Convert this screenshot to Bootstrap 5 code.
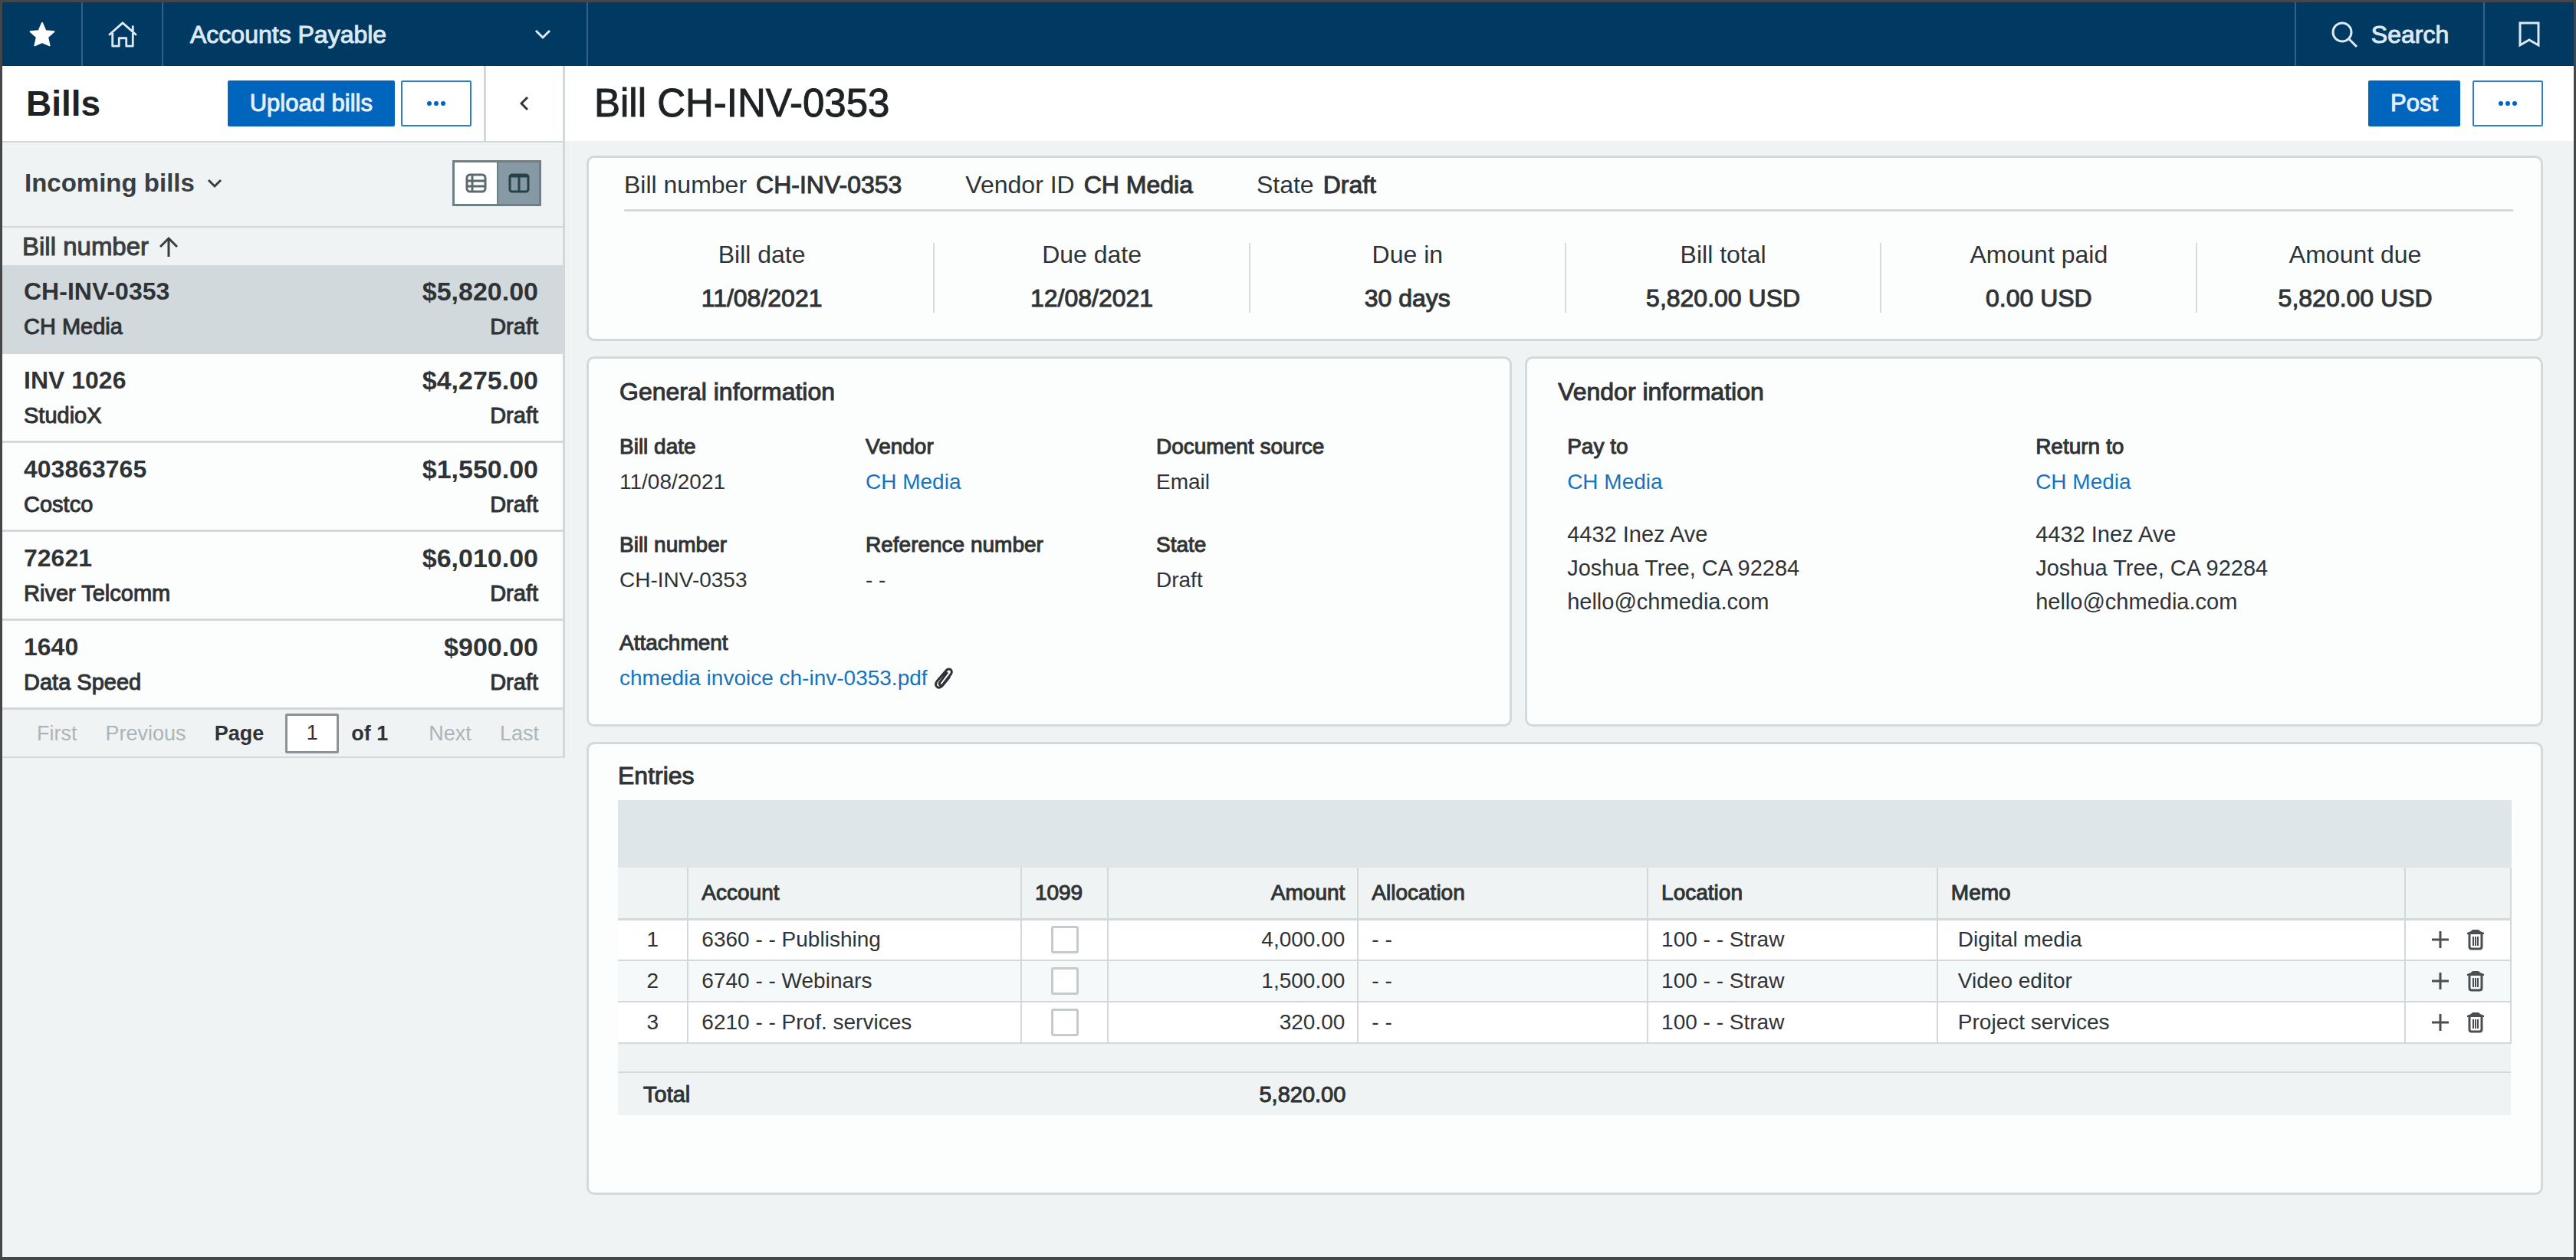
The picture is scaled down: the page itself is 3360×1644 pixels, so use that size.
<!DOCTYPE html>
<html lang="en">
<head>
<meta charset="utf-8">
<meta name="viewport" content="width=device-width, initial-scale=1">
<title>Accounts Payable - Bill CH-INV-0353</title>
<link href="https://cdn.jsdelivr.net/npm/bootstrap@5.3.0/dist/css/bootstrap.min.css" rel="stylesheet">
<style>
  :root { --line: #d3d9da; --ink: #303335; --brand: #0065bd; --surface: #eff3f3; }
  body {
    font-family: "Liberation Sans", Arial, sans-serif;
    font-size: 28px; line-height: 46px; color: var(--ink);
    background: var(--surface); min-height: 100vh;
    border: 3px solid #444648; border-bottom-width: 4px;
  }
  svg { display: block; flex: none; fill: none; stroke: currentColor; }
  .medium { font-weight: 400; -webkit-text-stroke: 1px currentColor; }
  a { color: #1673c0; text-decoration: none; }

  /* top bar */
  .topbar { height: 83px; background: #003962; color: #dce8f2; font-size: 32px; }
  .topbar .cell { border: 0 solid #2f618a; border-radius: 0; background: none; color: inherit; font-size: inherit; padding: 0; }
  .cell-icon { width: 105px; border-right-width: 2px !important; }
  .cell-app { width: 554px; border-right-width: 2px !important; padding: 0 46px 0 35px !important; }
  .cell-search { width: 246px; border-left-width: 2px !important; gap: 17px; }
  .cell-mark { width: 118px; border-left-width: 2px !important; }

  /* buttons */
  .btn-app { height: 60px; border-radius: 2px; border: 2px solid var(--brand); font-size: 31px; line-height: 36px; padding: 0 27px; }
  .btn-app.solid { background: var(--brand); color: #e2f0fd; }
  .btn-app.more { width: 92px; padding: 0; background: #fff; color: var(--brand); border-color: #2e7fc9; }

  /* bills list */
  .sidebar { width: 734px; border-right: 3px solid var(--line); }
  .side-head { height: 100px; background: #fff; border-bottom: 2px solid var(--line); padding-left: 31px; }
  .page-title { font-size: 51px; line-height: 60px; color: #1f2224; }
  .side-title { font-size: 46px; line-height: 60px; font-weight: 700; color: #1f2224; }
  .collapse-btn { width: 103px; height: 98px; border: 0; border-left: 3px solid var(--line); background: #fff; color: var(--ink); }
  .side-view { height: 111px; border-bottom: 2px solid var(--line); padding: 0 28px 4px 29px; }
  .view-select { font-size: 33px; font-weight: 700; border: 0; background: none; padding: 0; color: #3a3e40; }
  .toggle { border: 3px solid #6f7f86; }
  .toggle button { width: 55px; height: 54px; border: 0; padding: 0; background: #fff; color: #5d6a70; }
  .toggle button + button { background: #879aa3; color: #26404d; border-left: 2px solid #6f7f86; }
  .side-sort { height: 49px; padding: 0 26px; gap: 12px; font-size: 33px; border: 0; background: none; color: #3a3e40; }
  .bill { border: 0; border-bottom: 3px solid var(--line); background: #fcfefe; padding: 11px 32px 10px 28px; color: var(--ink); }
  .bill.current { background: #d2d9dc; }
  .bill .num { font-size: 32px; font-weight: 700; }
  .bill .amt { font-size: 34px; font-weight: 700; }
  .bill .sub { font-size: 29px; }
  .pager { height: 63px; border-bottom: 2px solid var(--line); font-size: 27px; padding: 0 31px 0 45px; }
  .pager .off { color: #aeb4b6; border: 0; background: none; padding: 0; }
  .pager input { width: 70px; height: 52px; margin-left: 12px; border: 3px solid #8b9396; border-radius: 2px; text-align: center; background: #fff; color: var(--ink); padding: 0; }

  /* bill detail */
  .main-head { height: 98px; background: #fff; padding: 0 40px 0 38px; }
  .detail { padding: 19px 40px 20px 28px; }
  .detail .gridgap { display: grid; gap: 20px; }
  .pair { display: grid; gap: 17px; grid-template-columns: 10fr 11fr; }
  .panel { background: #fcfefe; border: 3px solid var(--line); border-radius: 10px; }
  .panel-title { font-size: 32px; line-height: 46px; margin: 0; }
  .facts { font-size: 32px; height: 70px; margin: 0 36px 0 46px; padding-top: 12px; gap: 83px; border-bottom: 3px solid #d6dada; }
  .facts span + span { margin-left: 12px; }
  .totals { display: grid; grid-template-columns: 12fr repeat(5, 11fr); padding: 41px 36px 34px 2px; text-align: center; font-size: 32px; }
  .totals > div { height: 91px; line-height: 57px; border-right: 2px solid #d6dada; }
  .totals > div:last-child { border-right: 0; }
  .totals p { margin: -13px 0 13px; }
  .info { padding: 20px 40px 37px 40px; }
  .fields { display: grid; grid-template-columns: 321px 379px 1fr; row-gap: 36px; padding-top: 26px; }
  .parties { display: grid; grid-template-columns: 611px 1fr; padding: 26px 0 0 12px; }
  .parties address { font-size: 29px; line-height: 44px; margin: 23px 0 0; }

  /* entries grid */
  .entries { padding: 18px 38px 101px; }
  .band { height: 88px; background: #dfe6ea; margin-top: 9px; }
  .lines { table-layout: fixed; width: 100%; }
  .lines th, .lines td { height: 54px; padding: 0 16px 0 17px; border: 2px solid var(--line); border-left: 0; line-height: 46px; }
  .lines thead th { height: 67px; background: var(--surface); border-top: 0; border-bottom-width: 3px; }
  .lines tbody td { background: #fff; }
  .lines tbody tr:nth-child(2) td { background: #f6f9f9; }
  .lines .spacer td { height: 38px; background: var(--surface); border-right: 0; }
  .lines tfoot .sum > * { height: 56px; background: var(--surface); border: 0; font-size: 29px; }
  .lines tfoot .sum > th { padding-left: 33px; }
  .lines .memo { padding-left: 26px; }
  .lines input { width: 36px; height: 36px; margin: 0; appearance: none; border: 3px solid #c5cbcd; border-radius: 3px; background: #fff; display: block; margin: auto; }
  .lines button { border: 0; background: none; padding: 0; color: #4a4f52; }
</style>
</head>
<body>
<nav class="topbar d-flex align-items-stretch" aria-label="Main">
  <button class="cell cell-icon d-flex align-items-center justify-content-center" aria-label="Favorites">
    <svg width="36" height="36" viewBox="0 0 36 36" style="color:#fff"><path fill="currentColor" stroke="currentColor" stroke-width="2" stroke-linejoin="round" d="M18 3l4.400 10.200 11 1-8.300 7.300 2.500 10.900L18 28l-9.600 4.400 2.500-10.900L2.600 14.200l11-1z"/></svg>
  </button>
  <button class="cell cell-icon d-flex align-items-center justify-content-center" aria-label="Home">
    <svg width="38" height="36" viewBox="0 0 40 38" stroke-width="3" stroke-linejoin="round" stroke-linecap="round"><path d="M2 19L20 3l18 16M34 14V8M6 17v18h9V24h10v11h9V17"/></svg>
  </button>
  <button class="cell cell-app d-flex align-items-center justify-content-between">
    <span class="medium">Accounts Payable</span>
    <svg width="22" height="16" viewBox="0 0 22 16" stroke-width="3"><path d="M2 3l9 9 9-9"/></svg>
  </button>
  <button class="cell cell-search ms-auto d-flex align-items-center justify-content-center">
    <svg width="36" height="36" viewBox="0 0 36 36" stroke-width="3"><circle cx="15" cy="15" r="12"/><path d="M23.500 23.500L34 34"/></svg>
    <span class="medium">Search</span>
  </button>
  <button class="cell cell-mark d-flex align-items-center justify-content-center" aria-label="Bookmarks">
    <svg width="28" height="34" viewBox="0 0 28 34" stroke-width="3"><path d="M2 2h24v29l-12-7-12 7z"/></svg>
  </button>
</nav>

<div class="d-flex align-items-start">
  <aside class="sidebar flex-shrink-0" aria-label="Bills">
    <div class="side-head d-flex align-items-center">
      <h2 class="side-title mb-0 me-auto">Bills</h2>
      <button class="btn-app solid medium me-2">Upload bills</button>
      <button class="btn-app more me-3 d-flex align-items-center justify-content-center" aria-label="More actions">
        <svg width="30" height="8" viewBox="0 0 30 8" style="fill:currentColor;stroke:none"><circle cx="6" cy="4" r="3"/><circle cx="15" cy="4" r="3"/><circle cx="24" cy="4" r="3"/></svg>
      </button>
      <button class="collapse-btn d-flex align-items-center justify-content-center" aria-label="Collapse list">
        <svg width="12" height="20" viewBox="0 0 12 20" stroke-width="3"><path d="M10 2l-8 8 8 8"/></svg>
      </button>
    </div>
    <div class="side-view d-flex align-items-center justify-content-between">
      <button class="view-select d-flex align-items-center">Incoming bills
        <svg class="ms-3" width="20" height="14" viewBox="0 0 20 14" stroke-width="3"><path d="M2 3l8 8 8-8"/></svg>
      </button>
      <div class="toggle d-flex" role="group" aria-label="View">
        <button class="d-flex align-items-center justify-content-center" aria-label="Table view">
          <svg width="28" height="26" viewBox="0 0 28 26" stroke-width="3"><rect x="2" y="2" width="24" height="22" rx="4"/><path d="M2 10h24M2 17h24M9 2v22"/></svg>
        </button>
        <button class="d-flex align-items-center justify-content-center" aria-label="Split view" aria-pressed="true">
          <svg width="28" height="26" viewBox="0 0 28 26" stroke-width="3"><rect x="2" y="2" width="24" height="22" rx="3"/><path d="M2 4h24M14 4v20"/></svg>
        </button>
      </div>
    </div>
    <button class="side-sort medium d-flex align-items-center">Bill number
      <svg width="28" height="28" viewBox="0 0 28 28" stroke-width="3"><path d="M14 27V3M3 14L14 3l11 11"/></svg>
    </button>
    <div class="list-group list-group-flush rounded-0">
      <a href="#" class="bill current"><div class="d-flex justify-content-between"><span class="num">CH-INV-0353</span><span class="amt">$5,820.00</span></div><div class="sub medium d-flex justify-content-between"><span>CH Media</span><span>Draft</span></div></a>
      <a href="#" class="bill"><div class="d-flex justify-content-between"><span class="num">INV 1026</span><span class="amt">$4,275.00</span></div><div class="sub medium d-flex justify-content-between"><span>StudioX</span><span>Draft</span></div></a>
      <a href="#" class="bill"><div class="d-flex justify-content-between"><span class="num">403863765</span><span class="amt">$1,550.00</span></div><div class="sub medium d-flex justify-content-between"><span>Costco</span><span>Draft</span></div></a>
      <a href="#" class="bill"><div class="d-flex justify-content-between"><span class="num">72621</span><span class="amt">$6,010.00</span></div><div class="sub medium d-flex justify-content-between"><span>River Telcomm</span><span>Draft</span></div></a>
      <a href="#" class="bill"><div class="d-flex justify-content-between"><span class="num">1640</span><span class="amt">$900.00</span></div><div class="sub medium d-flex justify-content-between"><span>Data Speed</span><span>Draft</span></div></a>
    </div>
    <div class="pager d-flex align-items-center justify-content-between">
      <button class="off" disabled>First</button>
      <button class="off" disabled>Previous</button>
      <div class="d-flex align-items-center gap-3 me-3 fw-bold"><label for="page">Page</label><input id="page" type="text" value="1"><span>of 1</span></div>
      <button class="off" disabled>Next</button>
      <button class="off" disabled>Last</button>
    </div>
  </aside>

  <main class="flex-grow-1">
    <header class="main-head d-flex align-items-center">
      <h1 class="page-title medium mb-0 me-auto">Bill CH-INV-0353</h1>
      <button class="btn-app solid medium me-3">Post</button>
      <button class="btn-app more d-flex align-items-center justify-content-center" aria-label="More actions">
        <svg width="30" height="8" viewBox="0 0 30 8" style="fill:currentColor;stroke:none"><circle cx="6" cy="4" r="3"/><circle cx="15" cy="4" r="3"/><circle cx="24" cy="4" r="3"/></svg>
      </button>
    </header>
    <div class="detail">
      <div class="gridgap">
        <section class="panel">
          <div class="facts d-flex">
            <div><span>Bill number</span><span class="medium">CH-INV-0353</span></div>
            <div><span>Vendor ID</span><span class="medium">CH Media</span></div>
            <div><span>State</span><span class="medium">Draft</span></div>
          </div>
          <div class="totals">
            <div><p>Bill date<br><span class="medium">11/08/2021</span></p></div>
            <div><p>Due date<br><span class="medium">12/08/2021</span></p></div>
            <div><p>Due in<br><span class="medium">30 days</span></p></div>
            <div><p>Bill total<br><span class="medium">5,820.00 USD</span></p></div>
            <div><p>Amount paid<br><span class="medium">0.00 USD</span></p></div>
            <div><p>Amount due<br><span class="medium">5,820.00 USD</span></p></div>
          </div>
        </section>
        <div class="pair">
          <section class="panel info">
            <h2 class="panel-title medium">General information</h2>
            <div class="fields">
              <div><div class="medium">Bill date</div><div>11/08/2021</div></div>
              <div><div class="medium">Vendor</div><a href="#">CH Media</a></div>
              <div><div class="medium">Document source</div><div>Email</div></div>
              <div><div class="medium">Bill number</div><div>CH-INV-0353</div></div>
              <div><div class="medium">Reference number</div><div>- -</div></div>
              <div><div class="medium">State</div><div>Draft</div></div>
              <div class="text-nowrap"><div class="medium">Attachment</div>
                <div class="d-flex align-items-center gap-2"><a href="#">chmedia invoice ch-inv-0353.pdf</a>
                  <svg width="26" height="30" viewBox="0 0 26 30" stroke-width="3" stroke-linecap="round"><path d="M17 8L8 20c-2 3 1 6 4 3l10-13c4-5-2-10-6-5L4 19c-4 6 2 11 7 6l9-11"/></svg>
                </div>
              </div>
            </div>
          </section>
          <section class="panel info">
            <h2 class="panel-title medium">Vendor information</h2>
            <div class="parties">
              <div><div class="medium">Pay to</div><a href="#">CH Media</a>
                <address>4432 Inez Ave<br>Joshua Tree, CA 92284<br>hello@chmedia.com</address></div>
              <div><div class="medium">Return to</div><a href="#">CH Media</a>
                <address>4432 Inez Ave<br>Joshua Tree, CA 92284<br>hello@chmedia.com</address></div>
            </div>
          </section>
        </div>
        <section class="panel entries">
          <h2 class="panel-title medium">Entries</h2>
          <div class="band"></div>
          <table class="lines">
            <colgroup><col style="width:3.7%"><col style="width:17.6%"><col style="width:4.6%"><col style="width:13.2%"><col style="width:15.3%"><col style="width:15.3%"><col style="width:24.7%"><col style="width:5.6%"></colgroup>
            <thead>
              <tr><th></th><th class="medium">Account</th><th class="medium">1099</th><th class="medium text-end">Amount</th><th class="medium">Allocation</th><th class="medium">Location</th><th class="medium">Memo</th><th></th></tr>
            </thead>
            <tbody id="rows"></tbody>
            <tfoot>
              <tr class="spacer"><td colspan="8"></td></tr>
              <tr class="sum"><th class="medium" colspan="2">Total</th><td></td><td class="medium text-end">5,820.00</td><td colspan="4"></td></tr>
            </tfoot>
          </table>
        </section>
      </div>
    </div>
  </main>
</div>
<script>
  const entries = [
    ["6360 - - Publishing", "4,000.00", "Digital media"],
    ["6740 - - Webinars", "1,500.00", "Video editor"],
    ["6210 - - Prof. services", "320.00", "Project services"]
  ];
  document.getElementById("rows").innerHTML = entries.map(([account, amount, memo], i) => `
    <tr>
      <td class="text-center px-0">${i + 1}</td><td>${account}</td>
      <td class="px-0"><input type="checkbox" aria-label="1099 for line ${i + 1}"></td>
      <td class="text-end">${amount}</td><td>- -</td><td>100 - - Straw</td><td class="memo">${memo}</td>
      <td class="px-0"><div class="d-flex align-items-center justify-content-center gap-4">
        <button aria-label="Add line"><svg width="22" height="22" viewBox="0 0 22 22" stroke-width="3"><path d="M11 0v22M0 11h22"/></svg></button>
        <button aria-label="Delete line"><svg width="22" height="28" viewBox="0 0 22 28" stroke-width="3"><path fill="currentColor" stroke="none" d="M0 7V5l5-2q1-2 3-2h6q2 0 3 2l5 2v2z"/><path d="M3 6v17q0 3 3 3h10q3 0 3-3V6"/><path stroke-width="2" d="M8 10v12M11 10v12M14 10v12"/></svg></button>
      </div></td>
    </tr>`).join("");
</script>
<script src="https://cdn.jsdelivr.net/npm/bootstrap@5.3.0/dist/js/bootstrap.bundle.min.js"></script>
</body>
</html>
